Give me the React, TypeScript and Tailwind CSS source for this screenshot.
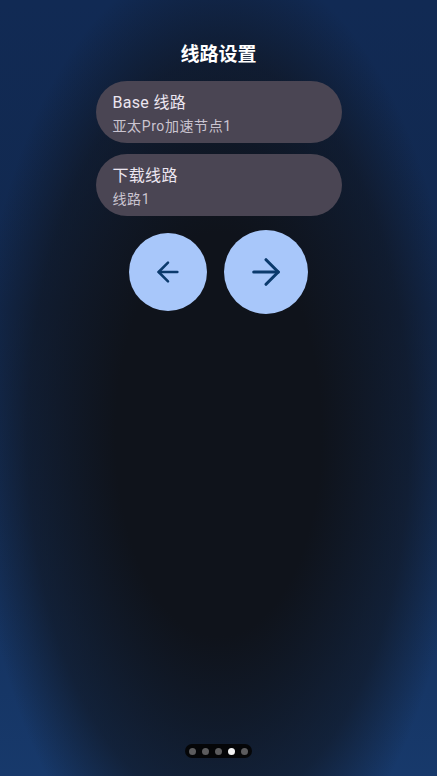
import { ArrowLeft, ArrowRight } from "lucide-react";

const routes = [
  { title: "Base 线路", value: "亚太Pro加速节点1" },
  { title: "下载线路", value: "线路1" },
];

export default function App() {
  return (
    <main
      className="flex h-[776px] w-full flex-col items-center overflow-hidden bg-[image:radial-gradient(ellipse_56%_62%_at_50%_56%,#0f131b_42%,rgba(15,19,27,0.6)_78%,rgba(15,19,27,0)_100%),linear-gradient(to_bottom,#112a54,#12294f_40%,#17396b)] text-[#e6e0e9]"
      style={{ fontFamily: 'Roboto, "Noto Sans CJK SC", sans-serif' }}
    >
      <h1 className="mt-[41px] text-[19px] font-bold leading-[28px] text-white">
        线路设置
      </h1>

      <section className="mt-[12px] flex w-[246px] flex-col gap-[11px]">
        {routes.map((r) => (
          <div
            key={r.title}
            className="flex h-[62px] flex-col rounded-full bg-[#4a4553] pl-[17px] pt-[11px]"
          >
            <span className="text-[16px] leading-[22px] tracking-[0.3px] text-[#ece6f0]">
              {r.title}
            </span>
            <span className="mt-[2px] text-[14px] leading-[20px] tracking-[0.6px] text-[#cac4d0]">
              {r.value}
            </span>
          </div>
        ))}
      </section>

      <div className="mt-[14px] flex items-center gap-[17px]">
        <button className="flex h-[78px] w-[78px] items-center justify-center rounded-full bg-[#a8c7fa] text-[#0b3a6c]">
          <ArrowLeft size={32} strokeWidth={1.9} />
        </button>
        <button className="flex h-[84px] w-[84px] items-center justify-center rounded-full bg-[#a8c7fa] text-[#0b3a6c]">
          <ArrowRight size={42} strokeWidth={1.8} />
        </button>
      </div>

      <div className="mt-auto mb-[18px] flex h-[14px] items-center gap-[6px] rounded-full bg-[#050608] px-[4px]">
        {[0, 1, 2, 3, 4].map((i) => (
          <span
            key={i}
            className={
              i === 3
                ? "h-[7px] w-[7px] rounded-full bg-[#f2f2f2]"
                : "h-[7px] w-[7px] rounded-full bg-[#5c5c5e]"
            }
          />
        ))}
      </div>
    </main>
  );
}
